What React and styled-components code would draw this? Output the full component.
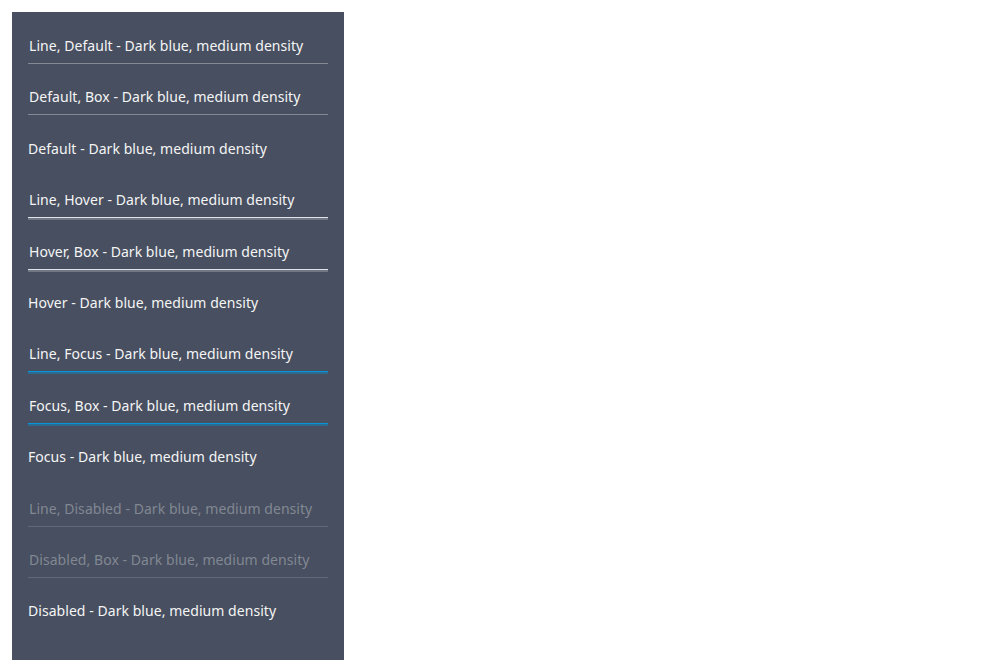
import React from "react";
import styled, { createGlobalStyle, css } from "styled-components";

const GlobalStyle = createGlobalStyle`
  body {
    margin: 0;
    background: #ffffff;
    font-family: "Noto Sans", "Open Sans", sans-serif;
  }
`;

const Page = styled.div`
  padding: 12px;
`;

const Panel = styled.div`
  width: 332px;
  height: 648px;
  box-sizing: border-box;
  background: #474f60;
  padding: 19px 16px 0;
  display: flex;
  flex-direction: column;
`;

const Field = styled.div`
  height: 51.42px;
  flex: none;
`;

const lineStates = {
  default: css`
    border-bottom: 1px solid rgba(245, 245, 245, 0.35);
  `,
  hover: css`
    border-bottom: 1px solid #dfe3ec;
    box-shadow: 0 2px 0 rgba(245, 245, 245, 0.24);
  `,
  focus: css`
    border-bottom: 1px solid #0696d7;
    box-shadow: 0 2px 0 rgba(6, 150, 215, 0.4);
  `,
  disabled: css`
    border-bottom: 1px solid rgba(245, 245, 245, 0.15);
  `,
};

const Input = styled.div`
  height: 33px;
  box-sizing: border-box;
  padding-top: 5px;
  padding-left: ${({ $underline }) => ($underline ? "1px" : "0")};
  font-size: 14px;
  line-height: 20px;
  letter-spacing: 0.05px;
  color: ${({ $state, $underline }) =>
    $state === "disabled" && $underline ? "rgba(245, 245, 245, 0.35)" : "#f5f5f5"};
  ${({ $underline, $state }) => $underline && lineStates[$state]}
`;

const rows = [
  { label: "Line, Default", state: "default", underline: true },
  { label: "Default, Box", state: "default", underline: true },
  { label: "Default", state: "default", underline: false },
  { label: "Line, Hover", state: "hover", underline: true },
  { label: "Hover, Box", state: "hover", underline: true },
  { label: "Hover", state: "hover", underline: false },
  { label: "Line, Focus", state: "focus", underline: true },
  { label: "Focus, Box", state: "focus", underline: true },
  { label: "Focus", state: "focus", underline: false },
  { label: "Line, Disabled", state: "disabled", underline: true },
  { label: "Disabled, Box", state: "disabled", underline: true },
  { label: "Disabled", state: "disabled", underline: false },
];

export default function App() {
  return (
    <Page>
      <GlobalStyle />
      <Panel>
        {rows.map((r) => (
          <Field key={r.label}>
            <Input $state={r.state} $underline={r.underline}>
              {r.label} - Dark blue, medium density
            </Input>
          </Field>
        ))}
      </Panel>
    </Page>
  );
}
